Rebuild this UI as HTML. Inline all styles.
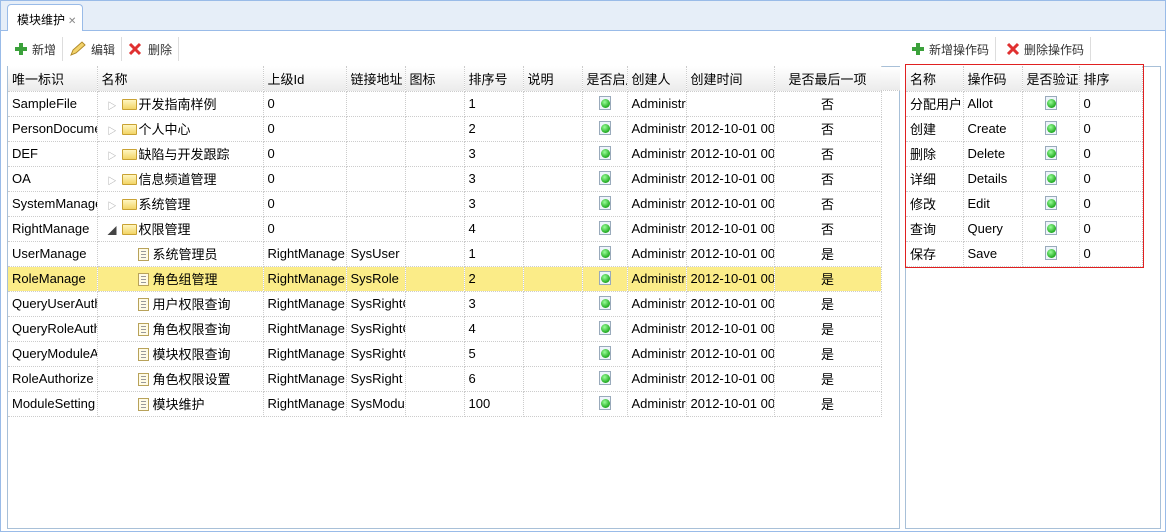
<!DOCTYPE html>
<html><head><meta charset="utf-8"><style>
*{box-sizing:border-box;margin:0;padding:0}
body{width:1166px;height:532px;background:#fff;font-family:"Liberation Sans","Noto Sans CJK SC",sans-serif;font-size:13px;color:#000;position:relative;overflow:hidden}
.outer{position:absolute;left:0;top:0;width:1166px;height:532px;border:1px solid #99bbe8;border-top:none}
.tabbar{position:absolute;left:0;top:0;width:1166px;height:31px;background:#e6eef8;border:1px solid #99bbe8}
.tab{position:absolute;left:7px;top:4px;width:76px;height:27px;background:#fff;border:1px solid #99bbe8;border-bottom:none;border-radius:4px 4px 0 0;padding:6px 0 0 9px;font-size:12px}
.tab span{color:#888;font-size:10px;margin-left:3px}
.tb{position:absolute;top:37px;height:24px;display:flex;align-items:center;font-size:12px}
.btn{display:flex;align-items:center;padding:0 6px 0 6px;height:24px;border-right:1px solid #ddd;color:#333}
.btn svg{margin-right:4px}
.panel{position:absolute;border:1px solid #a8c0d8;background:#fff}
table{border-collapse:collapse;table-layout:fixed;position:absolute;left:0;top:-1px}
th{height:25px;font-weight:normal;text-align:left;padding-left:4px;background:linear-gradient(#fff,#ebebeb);border-right:1px dotted #ccc;border-bottom:1px dotted #ccc;white-space:nowrap;overflow:hidden}
td{height:25px;padding-left:4px;border-right:1px dotted #ccc;border-bottom:1px dotted #ccc;white-space:nowrap;overflow:hidden}
tr.sel td{background:#fbec88}
.c{text-align:center;padding-left:0}
.ok{display:inline-block;width:12px;height:14px;background:#eef4fb;border:1px solid #9ab;position:relative;vertical-align:-2px}
.ok:after{content:"";position:absolute;left:1px;top:2px;width:9px;height:9px;border-radius:50%;background:radial-gradient(circle at 40% 35%,#9f9,#2a2 70%)}
.fold{display:inline-block;width:15px;height:11px;background:linear-gradient(#fff6c0,#f2d466);border:1px solid #c9a233;border-radius:1px;vertical-align:-1px;margin-right:2px}
.doc{display:inline-block;width:11px;height:13px;background:#fffbe6;border:1px solid #b8a25a;vertical-align:-2px;margin-right:4px;background-image:repeating-linear-gradient(transparent 0 2px,#999 2px 3px);background-size:5px 100%;background-position:2px 0;background-repeat:no-repeat}
.ar{display:inline-block;width:14px;color:#999;font-size:9px}
</style></head><body>
<div class="outer"></div>
<div class="tabbar"></div>
<div class="tab">模块维护<span>✕</span></div>
<div class="tb" style="left:8px">
<div class="btn"><svg width="14" height="14"><path d="M5 1h4v4h4v4H9v4H5V9H1V5h4z" fill="#3ba13b"/></svg>新增</div>
<div class="btn"><svg width="18" height="16"><path d="M2 14l2-5 9-8 3 3-9 8z" fill="#f3d36b" stroke="#b08a2a"/></svg>编辑</div>
<div class="btn"><svg width="16" height="14"><path d="M2 2l10 10M12 2L2 12" stroke="#e03030" stroke-width="3"/></svg>删除</div>
</div>
<div class="tb" style="left:905px">
<div class="btn"><svg width="14" height="14"><path d="M5 1h4v4h4v4H9v4H5V9H1V5h4z" fill="#3ba13b"/></svg>新增操作码</div>
<div class="btn" style="padding-left:10px"><svg width="14" height="14"><path d="M2 2l10 10M12 2L2 12" stroke="#e03030" stroke-width="3"/></svg>删除操作码</div>
</div>
<div class="panel" style="left:7px;top:66px;width:893px;height:463px">
<table style="width:873px">
<colgroup><col style="width:89px"><col style="width:166px"><col style="width:83px"><col style="width:59px"><col style="width:59px"><col style="width:59px"><col style="width:59px"><col style="width:45px"><col style="width:59px"><col style="width:88px"><col style="width:107px"></colgroup>
<tr><th>唯一标识</th><th>名称</th><th>上级Id</th><th>链接地址</th><th>图标</th><th>排序号</th><th>说明</th><th>是否启用</th><th>创建人</th><th>创建时间</th><th class="c">是否最后一项</th></tr>
<tr><td>SampleFile</td><td style="padding-left:10px"><span class="ar">▷</span><span class="fold"></span>开发指南样例</td><td>0</td><td></td><td></td><td>1</td><td></td><td class="c"><span class="ok"></span></td><td>Administr</td><td></td><td class="c">否</td></tr>
<tr><td>PersonDocume</td><td style="padding-left:10px"><span class="ar">▷</span><span class="fold"></span>个人中心</td><td>0</td><td></td><td></td><td>2</td><td></td><td class="c"><span class="ok"></span></td><td>Administr</td><td>2012-10-01 00</td><td class="c">否</td></tr>
<tr><td>DEF</td><td style="padding-left:10px"><span class="ar">▷</span><span class="fold"></span>缺陷与开发跟踪</td><td>0</td><td></td><td></td><td>3</td><td></td><td class="c"><span class="ok"></span></td><td>Administr</td><td>2012-10-01 00</td><td class="c">否</td></tr>
<tr><td>OA</td><td style="padding-left:10px"><span class="ar">▷</span><span class="fold"></span>信息频道管理</td><td>0</td><td></td><td></td><td>3</td><td></td><td class="c"><span class="ok"></span></td><td>Administr</td><td>2012-10-01 00</td><td class="c">否</td></tr>
<tr><td>SystemManage</td><td style="padding-left:10px"><span class="ar">▷</span><span class="fold"></span>系统管理</td><td>0</td><td></td><td></td><td>3</td><td></td><td class="c"><span class="ok"></span></td><td>Administr</td><td>2012-10-01 00</td><td class="c">否</td></tr>
<tr><td>RightManage</td><td style="padding-left:10px"><span class="ar" style="color:#444">◢</span><span class="fold"></span>权限管理</td><td>0</td><td></td><td></td><td>4</td><td></td><td class="c"><span class="ok"></span></td><td>Administr</td><td>2012-10-01 00</td><td class="c">否</td></tr>
<tr><td>UserManage</td><td style="padding-left:40px"><span class="doc"></span>系统管理员</td><td>RightManage</td><td>SysUser</td><td></td><td>1</td><td></td><td class="c"><span class="ok"></span></td><td>Administr</td><td>2012-10-01 00</td><td class="c">是</td></tr>
<tr class="sel"><td>RoleManage</td><td style="padding-left:40px"><span class="doc"></span>角色组管理</td><td>RightManage</td><td>SysRole</td><td></td><td>2</td><td></td><td class="c"><span class="ok"></span></td><td>Administr</td><td>2012-10-01 00</td><td class="c">是</td></tr>
<tr><td>QueryUserAuth</td><td style="padding-left:40px"><span class="doc"></span>用户权限查询</td><td>RightManage</td><td>SysRightC</td><td></td><td>3</td><td></td><td class="c"><span class="ok"></span></td><td>Administr</td><td>2012-10-01 00</td><td class="c">是</td></tr>
<tr><td>QueryRoleAuth</td><td style="padding-left:40px"><span class="doc"></span>角色权限查询</td><td>RightManage</td><td>SysRightC</td><td></td><td>4</td><td></td><td class="c"><span class="ok"></span></td><td>Administr</td><td>2012-10-01 00</td><td class="c">是</td></tr>
<tr><td>QueryModuleA</td><td style="padding-left:40px"><span class="doc"></span>模块权限查询</td><td>RightManage</td><td>SysRightC</td><td></td><td>5</td><td></td><td class="c"><span class="ok"></span></td><td>Administr</td><td>2012-10-01 00</td><td class="c">是</td></tr>
<tr><td>RoleAuthorize</td><td style="padding-left:40px"><span class="doc"></span>角色权限设置</td><td>RightManage</td><td>SysRight</td><td></td><td>6</td><td></td><td class="c"><span class="ok"></span></td><td>Administr</td><td>2012-10-01 00</td><td class="c">是</td></tr>
<tr><td>ModuleSetting</td><td style="padding-left:40px"><span class="doc"></span>模块维护</td><td>RightManage</td><td>SysModu</td><td></td><td>100</td><td></td><td class="c"><span class="ok"></span></td><td>Administr</td><td>2012-10-01 00</td><td class="c">是</td></tr>
</table>
<div style="position:absolute;left:873px;top:0;width:19px;height:24px;background:linear-gradient(#fff,#ebebeb);border-bottom:1px dotted #ccc"></div>
</div>
<div class="panel" style="left:905px;top:66px;width:256px;height:463px">
<table style="width:236px">
<colgroup><col style="width:57px"><col style="width:59px"><col style="width:57px"><col style="width:63px"></colgroup>
<tr><th>名称</th><th>操作码</th><th>是否验证</th><th>排序</th></tr>
<tr><td>分配用户</td><td>Allot</td><td class="c"><span class="ok"></span></td><td>0</td></tr>
<tr><td>创建</td><td>Create</td><td class="c"><span class="ok"></span></td><td>0</td></tr>
<tr><td>删除</td><td>Delete</td><td class="c"><span class="ok"></span></td><td>0</td></tr>
<tr><td>详细</td><td>Details</td><td class="c"><span class="ok"></span></td><td>0</td></tr>
<tr><td>修改</td><td>Edit</td><td class="c"><span class="ok"></span></td><td>0</td></tr>
<tr><td>查询</td><td>Query</td><td class="c"><span class="ok"></span></td><td>0</td></tr>
<tr><td>保存</td><td>Save</td><td class="c"><span class="ok"></span></td><td>0</td></tr>
</table>
</div>
<div style="position:absolute;left:905px;top:64px;width:239px;height:204px;border:1px solid #e02020;z-index:5"></div>
</body></html>
